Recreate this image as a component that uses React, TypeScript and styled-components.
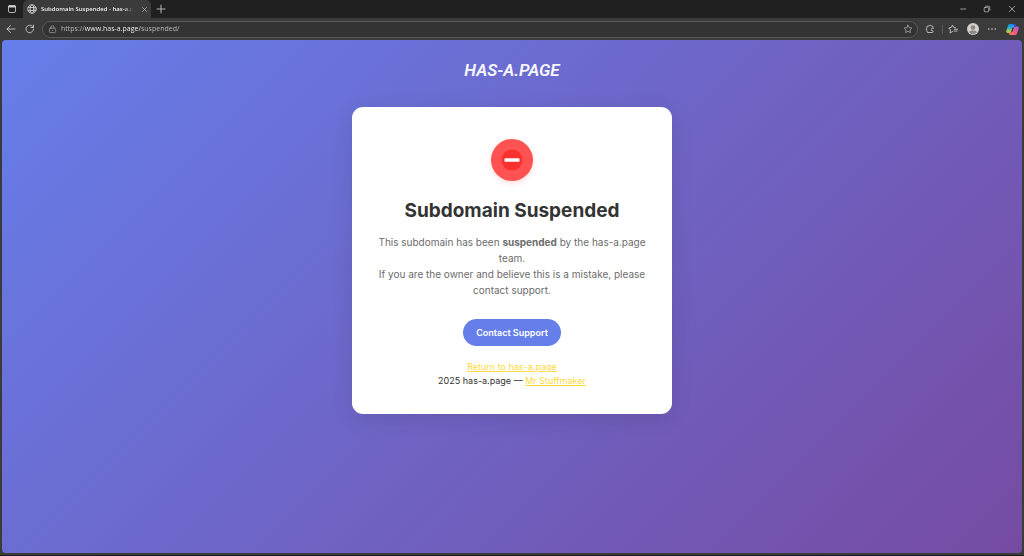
import React from "react";
import styled, { createGlobalStyle } from "styled-components";

const GlobalStyle = createGlobalStyle`
  *, *::before, *::after { box-sizing: border-box; }
  body { margin: 0; background: #3b3b3b; }
  button, input { font: inherit; margin: 0; }
`;

const Browser = styled.div`
  display: flex;
  flex-direction: column;
  min-height: 100vh;
  background: #3b3b3b;
  border-bottom: 1px solid #1c1c1c;
  font-family: "Open Sans", "Noto Sans", sans-serif;
  color: #d6d6d6;
`;

const TitleBar = styled.header`
  display: flex;
  align-items: center;
  height: 18px;
  background: #202020;
`;

const IconButton = styled.button<{ $width?: number; $dim?: boolean }>`
  display: flex;
  align-items: center;
  justify-content: center;
  flex: none;
  width: ${(p) => p.$width ?? 20}px;
  height: 18px;
  padding: 0;
  border: 0;
  background: none;
  color: ${(p) => (p.$dim ? "#a0a0a0" : "#cfcfcf")};
`;

const Tab = styled.div`
  display: flex;
  align-items: center;
  align-self: stretch;
  gap: 4px;
  width: 128px;
  padding-left: 4px;
  border-radius: 5px 5px 0 0;
  background: #3b3b3b;
`;

const TabTitle = styled.span`
  flex: 1;
  overflow: hidden;
  white-space: nowrap;
  font-size: 6px;
  font-weight: 600;
  line-height: 10px;
  color: #f0f0f0;
  mask-image: linear-gradient(to right, #000 90%, transparent);
`;

const WindowControls = styled.div`
  display: flex;
  margin-left: auto;
`;

const Toolbar = styled.nav`
  display: flex;
  align-items: center;
  height: 22px;
  padding-left: 1px;
`;

const AddressBar = styled.label`
  display: flex;
  align-items: center;
  flex: 1;
  min-width: 0;
  height: 17px;
  margin-left: 3px;
  border: 1px solid #595959;
  border-radius: 9px;
  background: #333333;
`;

const AddressInput = styled.input`
  flex: 1;
  min-width: 0;
  padding: 0;
  border: 0;
  outline: 0;
  font-size: 7px;
  font-weight: 500;
  line-height: 12px;
  background: linear-gradient(to right, #c4c4c4 24px, #ffffff 24px, #ffffff 79px, #c4c4c4 79px);
  background-clip: text;
  -webkit-text-fill-color: transparent;
`;

const Divider = styled.span`
  width: 1px;
  height: 9px;
  background: #5a5a5a;
`;

const Page = styled.main`
  display: flex;
  flex-direction: column;
  align-items: center;
  flex: 1;
  margin: 0 2px 2px;
  padding: 18px 16px 32px;
  border-radius: 4px;
  background: linear-gradient(135deg, #667eea 0%, #764ba2 100%);
  font-family: Inter, "Liberation Sans", sans-serif;
`;

const Brand = styled.div`
  font-family: Roboto, Inter, sans-serif;
  font-size: 17px;
  font-style: italic;
  font-weight: 600;
  line-height: 24px;
  color: #f8f8ff;
`;

const Card = styled.section`
  display: flex;
  flex-direction: column;
  align-items: center;
  width: 100%;
  max-width: 320px;
  margin-top: 25px;
  padding: 32px 24px 26px;
  border-radius: 11px;
  background: #ffffff;
  box-shadow: 0 5px 21px rgba(0, 0, 0, 0.1);
  color: #333333;
  text-align: center;
`;

const Badge = styled.div`
  display: flex;
  align-items: center;
  justify-content: center;
  width: 42px;
  height: 42px;
  border-radius: 50%;
  background: #ff5252;
  box-shadow: 0 2px 6px rgba(255, 82, 82, 0.2);
`;

const Title = styled.h1`
  margin: 18px 0 0;
  font-size: 19px;
  font-weight: 700;
  line-height: 24px;
`;

const Message = styled.p`
  margin: 11px 0 0;
  font-size: 10px;
  line-height: 16px;
  color: #6c6c6c;
`;

const SupportButton = styled.button`
  margin-top: 21px;
  height: 27px;
  padding: 0 13px;
  border: 0;
  border-radius: 14px;
  background: #667eea;
  color: #ffffff;
  font-size: 9px;
  font-weight: 600;
`;

const Footer = styled.footer`
  margin-top: 14px;
  font-size: 9px;
  line-height: 14px;
`;

const FooterLink = styled.a`
  color: #ffd93d;
`;

const Stroke = ({ d, size = 10, children }: { d?: string; size?: number; children?: React.ReactNode }) => (
  <svg width={size} height={size} viewBox="0 0 20 20" fill="none" stroke="currentColor" strokeWidth="1.7" strokeLinecap="round" strokeLinejoin="round" aria-hidden="true">
    {d && <path d={d} />}
    {children}
  </svg>
);

const STAR = "M10 2.2l2.4 5 5.4.8-3.9 3.8.9 5.4-4.8-2.6-4.8 2.6.9-5.4L2.2 8l5.4-.8z";

const CopilotLogo = () => (
  <svg width="13" height="13" viewBox="0 0 26 26" aria-hidden="true">
    <defs>
      <linearGradient id="cool" x1="0" y1="0" x2="0" y2="1">
        <stop offset="0" stopColor="#1688e8" />
        <stop offset=".4" stopColor="#28a9d4" />
        <stop offset=".7" stopColor="#8bcb62" />
        <stop offset="1" stopColor="#f3c52d" />
      </linearGradient>
      <linearGradient id="warm" x1="1" y1="0" x2="0" y2="1">
        <stop offset="0" stopColor="#a55be8" />
        <stop offset=".5" stopColor="#f0558a" />
        <stop offset="1" stopColor="#ff8a48" />
      </linearGradient>
    </defs>
    <path d="M8 2h8c2 0 3 1 3.500 3l.8 3H16c-2 0-3 1-3.600 3l-2 6c-.6 2-2 3-4 3H4c-3 0-4-2-3.200-5L4 5c.7-2 2-3 4-3z" fill="url(#cool)" />
    <path d="M18 24h-8c-2 0-3-1-3.500-3l-.6-2H9c2 0 3-1 3.600-3l2-6c.6-2 2-3 4-3H22c3 0 4 2 3.200 5L22 21c-.7 2-2 3-4 3z" fill="url(#warm)" />
    <path d="M15 2c3 0 4 1 4.600 3l.9 3H17c-1-3-2-5-4-6z" fill="#2856cf" />
    <path d="M13.500 10h2l-2.500 7h-2z" fill="#3b3b3b" />
  </svg>
);

export default function App() {
  return (
    <>
      <GlobalStyle />
      <Browser>
        <TitleBar>
          <IconButton $width={23} aria-label="Tab actions">
            <Stroke>
              <rect x="3" y="3" width="14" height="14" rx="3" />
              <path d="M4 5h12" strokeWidth="4" />
            </Stroke>
          </IconButton>
          <Tab>
            <Stroke>
              <circle cx="10" cy="10" r="8.500" />
              <ellipse cx="10" cy="10" rx="3.800" ry="8.500" />
              <path d="M2.500 7h15M2.500 13h15" />
            </Stroke>
            <TabTitle>Subdomain Suspended - has-a.page</TabTitle>
            <IconButton $width={14} aria-label="Close tab">
              <Stroke size={7} d="M4 4l12 12M16 4L4 16" />
            </IconButton>
          </Tab>
          <IconButton aria-label="New tab">
            <Stroke d="M10 2v16M2 10h16" />
          </IconButton>
          <WindowControls>
            <IconButton $width={25} aria-label="Minimize">
              <Stroke size={8} d="M4 10h13" />
            </IconButton>
            <IconButton $width={24} aria-label="Restore">
              <Stroke size={8}>
                <rect x="3" y="6" width="11" height="11" rx="2" />
                <path d="M7 3h7q3 0 3 3v7" />
              </Stroke>
            </IconButton>
            <IconButton $width={25} aria-label="Close">
              <Stroke size={8} d="M3 3l14 14M17 3L3 17" />
            </IconButton>
          </WindowControls>
        </TitleBar>
        <Toolbar>
          <IconButton $width={19} aria-label="Back">
            <Stroke d="M18 10H2M9 3l-7 7 7 7" />
          </IconButton>
          <IconButton $width={19} aria-label="Refresh">
            <Stroke d="M17 10a7.500 7.500 0 1 1-2.500-5.600L17 7M17 2v5h-5" />
          </IconButton>
          <AddressBar>
            <IconButton $width={18} $dim as="span">
              <Stroke size={9}>
                <rect x="3" y="7" width="14" height="10" rx="2.500" />
                <path d="M6.500 7V5a3.500 3.500 0 0 1 7 0v2M10 12v.5" />
              </Stroke>
            </IconButton>
            <AddressInput aria-label="Address" defaultValue="https://www.has-a.page/suspended/" />
            <IconButton $width={18} $dim aria-label="Add to favorites">
              <Stroke d={STAR} />
            </IconButton>
          </AddressBar>
          <IconButton $width={24} aria-label="Extensions">
            <Stroke d="M16 6.500V6a2 2 0 0 0-2-2h-1.500a2.300 2.300 0 0 0-4.400 0H6a2 2 0 0 0-2 2v2.500a2.200 2.200 0 0 0 0 4.200V15a2 2 0 0 0 2 2h8a2 2 0 0 0 2-2v-1.500h-1a2.500 2.500 0 0 1 0-5h1z" />
          </IconButton>
          <Divider />
          <IconButton aria-label="Favorites">
            <Stroke d="M15 7.500l-3.500-.5L9 2 6.500 7 1.500 8 5 12l-1 6 5-3M13 10.500h6M12 14h6" />
          </IconButton>
          <IconButton aria-label="Profile">
            <svg width="12" height="12" viewBox="0 0 26 26" aria-hidden="true">
              <circle cx="13" cy="13" r="13" fill="#d2cfcc" />
              <circle cx="13" cy="10" r="5" fill="#8b8885" />
              <path d="M5 21q0-5 5-5h6q5 0 5 5-8 6-16 0z" fill="#8b8885" />
            </svg>
          </IconButton>
          <IconButton $width={18} aria-label="Settings and more">
            <svg width="10" height="10" viewBox="0 0 20 20" fill="currentColor" aria-hidden="true">
              <circle cx="3.500" cy="10" r="1.600" />
              <circle cx="10" cy="10" r="1.600" />
              <circle cx="16.500" cy="10" r="1.600" />
            </svg>
          </IconButton>
          <IconButton $width={23} aria-label="Copilot">
            <CopilotLogo />
          </IconButton>
        </Toolbar>
        <Page>
          <Brand>HAS-A.PAGE</Brand>
          <Card>
            <Badge>
              <svg width="22" height="22" viewBox="0 0 22 22" aria-hidden="true">
                <circle cx="11" cy="11" r="10.500" fill="#fb3030" />
                <rect x="3.500" y="9.200" width="15" height="3.600" rx=".6" fill="#ffffff" />
              </svg>
            </Badge>
            <Title>Subdomain Suspended</Title>
            <Message>
              This subdomain has been <strong>suspended</strong> by the has-a.page team.
              <br />
              If you are the owner and believe this is a mistake, please contact support.
            </Message>
            <SupportButton>Contact Support</SupportButton>
            <Footer>
              <FooterLink href="#home">Return to has-a.page</FooterLink>
              <br />
              2025 has-a.page — <FooterLink href="#author">Mr Stuffmaker</FooterLink>
            </Footer>
          </Card>
        </Page>
      </Browser>
    </>
  );
}
